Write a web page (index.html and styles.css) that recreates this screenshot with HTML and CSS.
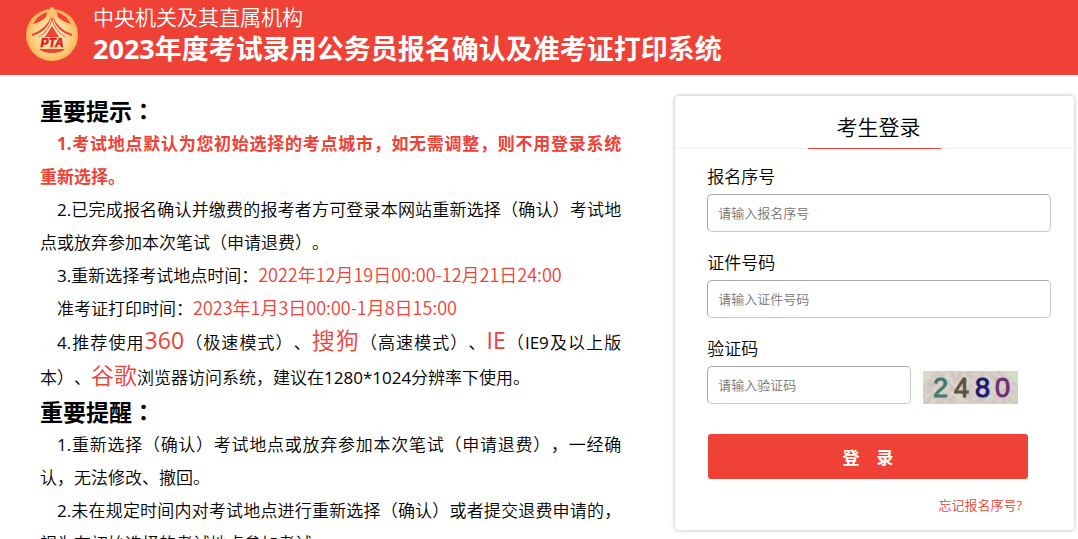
FILE: index.html
```
<!DOCTYPE html>
<html lang="zh-CN">
<head>
    <meta charset="UTF-8">
    <meta name="viewport" content="width=device-width, initial-scale=1.0">
    <title>公务员报名确认及准考证打印系统</title>
    <link rel="stylesheet" href="styles.css">
</head>
<body>
    <header class="header">
        <svg class="logo" viewBox="0 0 52 54" aria-hidden="true">
            <defs>
                <radialGradient id="gold" cx="50%" cy="52%" r="52%">
                    <stop offset="0" stop-color="#ffedc0" />
                    <stop offset="0.55" stop-color="#fddb98" />
                    <stop offset="1" stop-color="#fbb04c" />
                </radialGradient>
            </defs>
            <circle cx="26" cy="28" r="26" fill="url(#gold)" />
            <!-- side arcs -->
            <path d="M7 17 Q12 8 21 5 L20 10 Q15 15 7 17Z" fill="#ef4136" />
            <path d="M45 17 Q40 8 31 5 L32 10 Q37 15 45 17Z" fill="#ef4136" />
            <!-- road -->
            <path d="M24 1 L26 0 L28 1 L29 10 L26 14 L23 10Z" fill="#fcc36c" />
            <path d="M25 9 Q21 22 6 27 L6 29 Q23 24 25 9Z" fill="#ef4136" />
            <path d="M27 9 Q31 22 46 27 L46 29 Q29 24 27 9Z" fill="#ef4136" />
            <path d="M26 11 Q24 23 13 30 M26 11 Q28 23 39 30" fill="none" stroke="#f0604a" stroke-width="1" />
            <path d="M26 19 L33 30 H19Z" fill="#ef4136" />
            <path d="M13 42 H39 Q35 46 26 46 Q17 46 13 42Z" fill="#ef4136" />
            <text x="26" y="40" text-anchor="middle" class="logo-text">PTA</text>
        </svg>
        <div class="titles">
            <p class="subtitle">中央机关及其直属机构</p>
            <h1>2023年度考试录用公务员报名确认及准考证打印系统</h1>
        </div>
    </header>

    <main class="main">
        <section class="notice">
            <h2>重要提示<span class="mark" lang="zh-TW">：</span></h2>
            <p class="strong">1.考试地点默认为您初始选择的考点城市，如无需调整，则不用登录系统<span class="keep">重新选择。</span></p>
            <p>2.已完成报名确认并缴费的报考者方可登录本网站重新选择（确认）考试地点或放弃参加本次笔试（申请退费）。</p>
            <p>3.重新选择考试地点时间：<span class="date">2022年12月19日00:00-12月21日24:00</span></p>
            <p>准考证打印时间：<span class="date">2023年1月3日00:00-1月8日15:00</span></p>
            <p class="browsers">4.推荐使用<span class="big">360</span>（极速模式）、<span class="big">搜狗</span>（高速模式）、<span class="big">IE</span>（IE9及以上版本）、<span class="big">谷歌</span>浏览器访问系统，建议在1280*1024分辨率下使用。</p>
            <h2>重要提醒<span class="mark" lang="zh-TW">：</span></h2>
            <p>1.重新选择（确认）考试地点或放弃参加本次笔试（申请退费），一经确认，无法修改、撤回。</p>
            <p>2.未在规定时间内对考试地点进行重新选择（确认）或者提交退费申请的，视为在初始选择的考试地点参加考试。</p>
        </section>

        <form class="login">
            <div class="login-head">
                <h3>考生登录</h3>
            </div>
            <div class="login-body">
                <div class="field">
                    <label for="regno">报名序号</label>
                    <input type="text" id="regno" placeholder="请输入报名序号">
                </div>
                <div class="field">
                    <label for="idno">证件号码</label>
                    <input type="text" id="idno" placeholder="请输入证件号码">
                </div>
                <div class="field">
                    <label for="code">验证码</label>
                    <div class="code-row">
                        <input type="text" id="code" placeholder="请输入验证码">
                        <svg class="captcha" viewBox="0 0 95 33" role="img" aria-label="2480">
                            <defs>
                                <filter id="grain" x="0" y="0" width="100%" height="100%">
                                    <feTurbulence type="fractalNoise" baseFrequency="0.18" numOctaves="3" seed="4" />
                                    <feColorMatrix type="saturate" values="0.3" />
                                    <feColorMatrix values="0.7 0 0 0 0.42  0 0.7 0 0 0.38  0 0 0.7 0 0.34  0 0 0 0 1" />
                                </filter>
                            </defs>
                            <rect width="95" height="33" fill="#c6bbb0" />
                            <rect width="95" height="33" filter="url(#grain)" opacity="0.5" />
                            <path d="M0 12 L12 0 M0 30 L28 2 M20 0 L44 33 M38 0 L60 24 M58 33 L90 8 M4 4 L40 30 M70 0 L95 22" stroke="#e6e0d6" stroke-width="1" />
                            <path d="M0 0 H9 L0 12Z M82 0 H95 V14Z" fill="#cfe3c3" opacity="0.8" />
                            <g class="captcha-text">
                                <text x="10" y="26" fill="#427a70" stroke="#427a70">2</text>
                                <text x="31" y="26" fill="#5b5147" stroke="#5b5147">4</text>
                                <text x="52" y="26" fill="#1b1870" stroke="#1b1870">8</text>
                                <text x="72" y="26" fill="#752b78" stroke="#752b78">0</text>
                            </g>
                        </svg>
                    </div>
                </div>
                <button type="submit" class="btn-login">登&emsp;录</button>
                <a class="forgot" href="#">忘记报名序号?</a>
            </div>
        </form>
    </main>
</body>
</html>
```
FILE: styles.css
```
* {
    box-sizing: border-box;
}
body {
    margin: 0;
    background: #fff;
    color: #000;
    font-family: "Open Sans", "Noto Sans CJK SC DemiLight", "Noto Sans CJK SC", sans-serif;
    font-size: 17px;
    font-weight: 400;
    text-spacing-trim: space-all;
}
h1, h2, h3, p {
    margin: 0;
}
h1, h2, .strong, .btn-login {
    font-family: "Open Sans", "Noto Sans CJK SC", sans-serif;
}

.header {
    display: flex;
    align-items: flex-start;
    gap: 15px;
    height: 75px;
    padding: 3px 26px;
    background: #ef4136;
    color: #fff;
}
.logo {
    width: 52px;
    height: 54px;
    margin-top: 4px;
}
.logo-text {
    font: italic bold 12px "Liberation Sans", sans-serif;
    fill: #e8131b;
    stroke: #e8131b;
    stroke-width: 0.5px;
}
.subtitle {
    font-size: 21px;
    line-height: 28px;
}
h1 {
    font-size: 27px;
    line-height: 36px;
    font-weight: bold;
}

.main {
    display: flex;
    align-items: flex-start;
    padding: 19px 4px 0 40px;
}
.notice {
    flex: 1;
    margin-right: 54px;
    text-align: justify;
    line-height: 33px;
}
.notice h2 {
    font-size: 23px;
    line-height: 32px;
    font-weight: bold;
}
.notice p {
    text-indent: 1em;
}
.notice .strong {
    color: #ef4136;
    font-weight: bold;
}
.mark {
    font-family: "Noto Sans CJK TC", sans-serif;
}
.keep {
    white-space: nowrap;
}
.date, .big {
    color: #ef4136;
    line-height: 1;
}
.date {
    font-family: "Noto Sans CJK SC", sans-serif;
    font-size: 18px;
    font-weight: 350;
}
.big {
    font-size: 23px;
}
.notice .browsers {
    line-height: 35px;
}

.login {
    width: 37vw;
    margin-top: 2px;
    border-radius: 4px;
    box-shadow: 0 0 4px rgba(0, 0, 0, 0.3);
}
.login-head {
    display: flex;
    justify-content: center;
    height: 53px;
    border-bottom: 1px solid #f2f2f2;
}
.login-head h3 {
    width: 33.3%;
    height: 53px;
    padding-left: 8px;
    border-bottom: 1px solid #ef4136;
    font-size: 21px;
    line-height: 62px;
    font-weight: 400;
    text-align: center;
}
.login-body {
    display: flex;
    flex-direction: column;
    padding: 11px 23px 13px 32px;
}
.field {
    margin-bottom: 14px;
}
.field label {
    display: block;
    line-height: 34px;
}
.field input {
    display: block;
    width: 100%;
    height: 38px;
    padding: 0 10px;
    border: 1px solid;
    border-color: #a9a9a9 #c8c8c8 #c8c8c8 #a9a9a9;
    border-radius: 5px;
    background: #fff;
    font: inherit;
    font-size: 13px;
}
.field input::placeholder {
    color: #757575;
}
.code-row {
    display: flex;
    align-items: flex-end;
    gap: 12px;
}
.field .code-row input {
    width: 204px;
}
.captcha {
    width: 95px;
    height: 33px;
}
.captcha-text {
    font: 27px "Liberation Sans", sans-serif;
    stroke-width: 1px;
}
.btn-login {
    height: 45px;
    margin: 16px 23px 0 1px;
    border: none;
    border-radius: 3px;
    background: #ef4136;
    color: #fff;
    font-size: 17px;
    font-weight: bold;
    cursor: pointer;
}
.forgot {
    align-self: flex-end;
    margin: 14px 29px 0 0;
    color: #ef4136;
    font-size: 13px;
    line-height: 24px;
    text-decoration: none;
}
```
